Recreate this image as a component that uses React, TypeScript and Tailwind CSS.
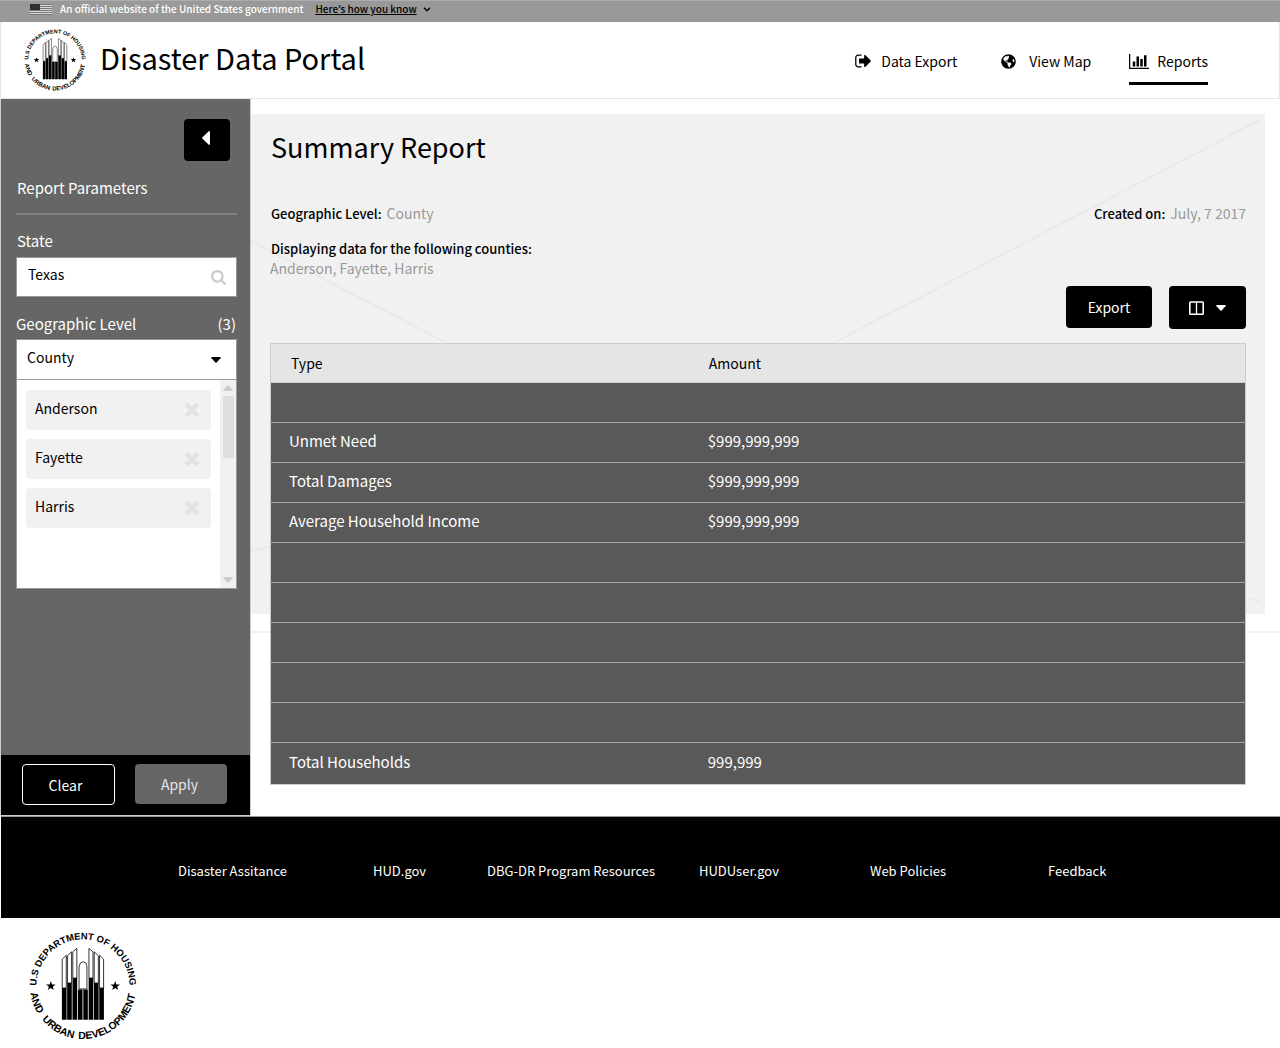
import React from "react";
import { FaGlobeAmericas } from "react-icons/fa";

type IconProps = { className?: string };

function SignOutIcon({ className }: IconProps) {
  return (
    <svg viewBox="0 0 1664 1792" className={className} fill="currentColor" aria-hidden="true">
      <path d="M640 1440q0 4 1 20t.5 26.5-3 23.5-10 19.5-20.5 6.5h-320q-119 0-203.500-84.500t-84.500-203.500v-704q0-119 84.500-203.500t203.500-84.500h320q13 0 22.500 9.500t9.500 22.500q0 4 1 20t.5 26.500-3 23.500-10 19.500-20.500 6.500h-320q-66 0-113 47t-47 113v704q0 66 47 113t113 47h312l11.500 1 11.500 3 8 5.500 7 9 2 13.500zm928-544q0 26-19 45l-544 544q-19 19-45 19t-45-19-19-45v-288h-448q-26 0-45-19t-19-45v-384q0-26 19-45t45-19h448v-288q0-26 19-45t45-19 45 19l544 544q19 19 19 45z" />
    </svg>
  );
}

function BarChartIcon({ className }: IconProps) {
  return (
    <svg viewBox="0 128 2048 1536" className={className} fill="currentColor" aria-hidden="true">
      <path d="M640 896v512h-256v-512h256zm384-512v1024h-256v-1024h256zm1024 1152v128h-2048v-1536h128v1408h1920zm-640-896v768h-256v-768h256zm384-384v1152h-256v-1152h256z" />
    </svg>
  );
}

function SearchIcon({ className }: IconProps) {
  return (
    <svg viewBox="64 128 1664 1664" className={className} fill="currentColor" aria-hidden="true">
      <path d="M1216 832q0-185-131.500-316.500t-316.500-131.500-316.500 131.500-131.500 316.500 131.500 316.500 316.500 131.500 316.500-131.500 131.500-316.500zm512 832q0 52-38 90t-90 38q-54 0-90-38l-343-342q-179 124-399 124-143 0-273.500-55.500t-225-150-150-225-55.500-273.500 55.500-273.500 150-225 225-150 273.500-55.500 273.500 55.500 225 150 150 225 55.500 273.500q0 220-124 399l343 343q37 37 37 90z" />
    </svg>
  );
}

function TimesIcon({ className }: IconProps) {
  return (
    <svg viewBox="302 366 1188 1188" className={className} fill="currentColor" aria-hidden="true">
      <path d="M1490 1322q0 40-28 68l-136 136q-28 28-68 28t-68-28l-294-294-294 294q-28 28-68 28t-68-28l-136-136q-28-28-28-68t28-68l294-294-294-294q-28-28-28-68t28-68l136-136q28-28 68-28t68 28l294 294 294-294q28-28 68-28t68 28l136 136q28 28 28 68t-28 68l-294 294 294 294q28 28 28 68z" />
    </svg>
  );
}

function Triangle({ className }: IconProps) {
  return (
    <svg viewBox="0 0 10 6" className={className} fill="currentColor" aria-hidden="true">
      <path d="M1 0h8q1.400.2.500 1.200L5.600 5.500q-.6.600-1.200 0L.5 1.200Q-.4.200 1 0z" />
    </svg>
  );
}

function FlagIcon({ className }: IconProps) {
  return (
    <svg viewBox="0 0 22 11" className={className} aria-hidden="true">
      <rect width="22" height="11" fill="#d9d9d9" />
      {[0, 2, 4, 6, 8, 10].map((y) => (
        <rect key={y} y={y} width="22" height="1" fill="#777" />
      ))}
      <rect width="10" height="6" fill="#2b2b2b" />
      <path d="M1 1.500h8M2 3h7M1 4.500h8" stroke="#555" strokeWidth=".5" strokeDasharray="1 1" />
    </svg>
  );
}

const STAR = "M0-5 1.200-1.600 4.800-1.500 2 .7 3 4.100 0 2.100-3 4.100-2 .7-4.800-1.500-1.200-1.600z";

function HudSeal({ id, className }: { id: string; className: string }) {
  return (
    <svg
      viewBox="9 7 109 109"
      className={"overflow-visible " + className}
      role="img"
      aria-label="U.S Department of Housing and Urban Development"
    >
      <defs>
        <path id={id + "-top"} d="M63.500 108.500A47 47 0 0 1 63.500 14.500A47 47 0 0 1 63.500 108.500" />
        <path id={id + "-bottom"} d="M63.500 8A53.500 53.500 0 0 0 63.500 115A53.500 53.500 0 0 0 63.500 8" />
      </defs>
      <g fontFamily="Liberation Sans, Arial, sans-serif" fontWeight="700" textAnchor="middle">
        <text fontSize="9.500">
          <textPath href={"#" + id + "-top"} startOffset="50%">U.S DEPARTMENT OF HOUSING</textPath>
        </text>
        <text fontSize="10.500">
          <textPath href={"#" + id + "-bottom"} startOffset="30.500%">AND</textPath>
        </text>
        <text fontSize="10.500">
          <textPath href={"#" + id + "-bottom"} startOffset="41.500%">URBAN</textPath>
        </text>
        <text fontSize="10.500">
          <textPath href={"#" + id + "-bottom"} startOffset="60.500%">DEVELOPMENT</textPath>
        </text>
      </g>
      <path transform="translate(31 61.500)" d={STAR} />
      <path transform="translate(96 61.500)" d={STAR} />
      <g fill="#fff" stroke="#000" strokeWidth=".8">
        <path d="M42.500 63.500V34.500L46.600 30.500V63.500z" />
        <path d="M47.800 58.500V31L52 27V58.500z" />
        <path d="M53.200 53.500V27L57.300 23.500V53.500z" />
        <path d="M59.500 64.500V42Q60.500 37 63.500 37Q67.500 37.500 67.500 42V64.500z" />
        <path d="M69.500 53.500V23.500L73.600 27V53.500z" />
        <path d="M74.800 58.500V27L79 31V58.500z" />
        <path d="M80.200 63.500V30.500L84.300 34.500V63.500z" />
      </g>
      <path d="M42.200 63.500h4.700V95.500h-4.700zM47.500 58.500h4.700V95.500h-4.700zM52.900 53.500h4.700V95.500h-4.700zM58.400 65h4.600V95.500h-4.600zM63.800 65h4.600V95.500h-4.600zM69.200 53.500h4.700V95.500h-4.700zM74.600 58.500h4.700V95.500h-4.700zM79.900 63.500h4.700V95.500h-4.700z" />
    </svg>
  );
}

function Banner() {
  return (
    <div className="flex h-[22px] items-start border-t border-[#adadad] bg-[#999] pl-[30px] text-[10px] leading-4 font-medium">
      <FlagIcon className="mt-[3px] h-[11px] w-[22px]" />
      <span className="ml-2 text-white">An official website of the United States government</span>
      <button type="button" className="ml-3 flex items-center gap-[6px] text-black">
        <span className="underline">Here’s how you know</span>
        <svg viewBox="0 0 8 5" className="h-[5px] w-2" fill="none" stroke="currentColor" strokeWidth="1.300" aria-hidden="true">
          <path d="M1 .7 4 3.800 7 .7" />
        </svg>
      </button>
    </div>
  );
}

function Header() {
  return (
    <header className="flex h-[77px] items-center justify-between border border-t-0 border-[#e6e6e6] bg-white pr-[71px] pl-[23px]">
      <div className="flex items-center">
        <HudSeal id="seal-header" className="size-[62px]" />
        <span className="ml-[14px] pb-[6px] text-[29px] leading-9">Disaster Data Portal</span>
      </div>
      <nav className="flex items-center pt-1 text-sm">
        <a href="#export" className="mr-11 flex h-[46px] items-center pb-[2px]">
          <SignOutIcon className="mr-[9px] h-[18px] w-[17px]" />
          Data Export
        </a>
        <a href="#map" className="mr-[38px] flex h-[46px] items-center pb-[2px]">
          <FaGlobeAmericas className="mr-[13px] size-[15px]" />
          View Map
        </a>
        <a href="#reports" aria-current="page" className="flex h-[46px] items-center border-y-3 border-t-transparent border-b-black pb-[2px]">
          <BarChartIcon className="mr-2 h-[15px] w-5" />
          Reports
        </a>
      </nav>
    </header>
  );
}

const counties = ["Anderson", "Fayette", "Harris"];

function Sidebar() {
  return (
    <aside className="flex w-[251px] shrink-0 flex-col border border-t-0 border-[#ccc] bg-[#666] text-white">
      <div className="flex grow flex-col pr-[13px] pl-[15px]">
        <button
          type="button"
          aria-label="Collapse panel"
          className="mt-5 mr-[7px] flex h-[42px] w-[46px] items-center justify-center self-end rounded bg-black pr-[2px] pb-1"
        >
          <svg viewBox="0 0 8 14" className="h-[14px] w-2" fill="currentColor" aria-hidden="true">
            <path d="M8 1v12q-.3 1.500-1.500.6L.5 7.700Q-.1 7 .5 6.300L6.500.4Q7.700-.5 8 1z" />
          </svg>
        </button>
        <h2 className="mt-[15px] pl-[1px] text-[15px] leading-6">Report Parameters</h2>
        <hr className="mt-[13px] border-t-2 border-[#808080]" />
        <label htmlFor="state" className="mt-[14px] pl-[1px] text-[15px] leading-6">
          State
        </label>
        <div className="mt-1 flex h-10 items-center border border-[#999] bg-white pr-[10px] pl-[11px] text-black">
          <input id="state" type="text" defaultValue="Texas" className="min-w-0 grow pb-[6px] text-sm outline-none" />
          <SearchIcon className="size-[15px] shrink-0 text-[#ccc]" />
        </div>
        <div className="mt-[15px] flex justify-between pr-[1px] text-[15px] leading-6">
          <label htmlFor="level">Geographic Level</label>
          <span>(3)</span>
        </div>
        <div className="mt-[3px] grid h-[41px] items-center border border-[#999] bg-white text-black">
          <select
            id="level"
            defaultValue="County"
            className="col-start-1 row-start-1 h-full w-full appearance-none pb-[6px] pl-[10px] text-sm outline-none"
          >
            <option>County</option>
            <option>State</option>
          </select>
          <Triangle className="pointer-events-none col-start-1 row-start-1 mr-[15px] h-[6px] w-[10px] justify-self-end" />
        </div>
        <div className="flex h-[209px] border border-t-0 border-[#999] bg-white text-black">
          <ul className="flex grow flex-col gap-[9px] py-[10px] pr-[9px] pl-[9px]">
            {counties.map((name) => (
              <li key={name} className="flex h-10 items-center justify-between rounded bg-[#f1f1f1] pr-3 pl-[9px] text-sm">
                <span className="pb-1">{name}</span>
                <button type="button" aria-label={"Remove " + name} className="text-[#e3e3e3]">
                  <TimesIcon className="size-[14px]" />
                </button>
              </li>
            ))}
          </ul>
          <div className="flex w-4 flex-col items-center bg-[#f1f1f1] py-[5px] text-[#ccc]" aria-hidden="true">
            <Triangle className="h-[6px] w-[10px] rotate-180" />
            <div className="mt-[5px] mb-auto h-[62px] w-[11px] bg-[#dedede]" />
            <Triangle className="h-[6px] w-[10px]" />
          </div>
        </div>
      </div>
      <div className="flex h-[60px] gap-5 bg-black pt-[9px] pl-[21px] text-sm">
        <button type="button" className="h-[41px] w-[93px] rounded border border-white pr-[6px]">
          Clear
        </button>
        <button type="button" className="h-10 w-[92px] rounded bg-[#666] pr-[3px] text-[#e6e6e6]">
          Apply
        </button>
      </div>
    </aside>
  );
}

const rows: [string, string][] = [
  ["", ""],
  ["Unmet Need", "$999,999,999"],
  ["Total Damages", "$999,999,999"],
  ["Average Household Income", "$999,999,999"],
  ["", ""],
  ["", ""],
  ["", ""],
  ["", ""],
  ["", ""],
  ["Total Households", "999,999"],
];

function ReportTable() {
  return (
    <table className="mt-[14px] w-full border-collapse border border-[#ccc] text-left">
      <thead>
        <tr className="h-[39px] bg-[#e5e5e5] text-sm">
          <th className="w-[43%] pl-5 font-normal">Type</th>
          <th className="pl-[19px] font-normal">Amount</th>
        </tr>
      </thead>
      <tbody className="bg-[#595959] text-[15px] leading-6 text-white">
        {rows.map(([type, amount], i) => (
          <tr key={i} className="h-10 border-t border-[#a6a6a6] first:border-[#ccc] last:h-[42px]">
            <td className="pb-1 pl-[18px]">{type}</td>
            <td className="pb-1 pl-[18px]">{amount}</td>
          </tr>
        ))}
      </tbody>
    </table>
  );
}

function Report() {
  return (
    <main className="grid min-w-0 grow grid-cols-1 pt-[15px]">
      <div className="col-start-1 row-start-1 flex h-[519px] flex-col justify-between self-start border-b-2 border-[#f1f1f1]">
        <svg viewBox="0 0 1014 500" preserveAspectRatio="none" className="mr-[15px] h-[500px] bg-[#f1f1f1]" aria-hidden="true">
          <path
            d="M0 127 196 229M1009 6 582 229M0 437 30 430M990 483 1009 487"
            fill="none"
            stroke="#e5e5e5"
            strokeWidth="1.200"
          />
        </svg>
      </div>
      <div className="col-start-1 row-start-1 pr-[34px] pb-[31px] pl-[19px]">
        <h1 className="pt-[13px] pl-[1px] text-[27px] leading-10">Summary Report</h1>
        <div className="mt-9 flex justify-between pl-[1px] text-[13px] leading-5 font-medium">
          <p>
            Geographic Level: <span className="ml-[2px] text-sm font-normal text-[#999]">County</span>
          </p>
          <p>
            Created on: <span className="ml-[2px] text-sm font-normal text-[#999]">July, 7 2017</span>
          </p>
        </div>
        <p className="mt-[15px] pl-[1px] text-[13px] leading-5 font-medium">Displaying data for the following counties:</p>
        <p className="text-sm leading-[18px] text-[#999]">Anderson, Fayette, Harris</p>
        <div className="mt-[9px] flex justify-end gap-[17px] text-sm text-white">
          <button type="button" className="h-[42px] w-[86px] rounded bg-black">
            Export
          </button>
          <button
            type="button"
            aria-label="Choose columns"
            className="flex h-[43px] w-[77px] items-center justify-center gap-3 rounded bg-black"
          >
            <svg viewBox="0 0 15 14" className="h-[14px] w-[15px]" fill="none" stroke="currentColor" aria-hidden="true">
              <rect x=".8" y="1" width="13.400" height="12.200" rx=".8" strokeWidth="1.600" />
              <path d="M7.500 1v12" strokeWidth="1.300" />
            </svg>
            <Triangle className="h-[6px] w-[10px]" />
          </button>
        </div>
        <ReportTable />
      </div>
    </main>
  );
}

const footerLinks = ["Disaster Assitance", "HUD.gov", "DBG-DR Program Resources", "HUDUser.gov", "Web Policies", "Feedback"];

export default function App() {
  return (
    <div className="bg-white font-['Noto_Sans_CJK_KR',sans-serif] text-black">
      <Banner />
      <Header />
      <div className="flex">
        <Sidebar />
        <Report />
      </div>
      <footer>
        <nav className="ml-[1px] grid h-[102px] grid-cols-[195fr_114fr_212fr_171fr_178fr_232fr] items-center border-t border-[#999] bg-black pt-[6px] pl-[177px] text-[13px] whitespace-nowrap text-white">
          {footerLinks.map((label) => (
            <a key={label} href="#footer" className="justify-self-start">
              {label}
            </a>
          ))}
        </nav>
        <HudSeal id="seal-footer" className="mt-[14px] mb-2 ml-[29px] size-[108px]" />
      </footer>
    </div>
  );
}
